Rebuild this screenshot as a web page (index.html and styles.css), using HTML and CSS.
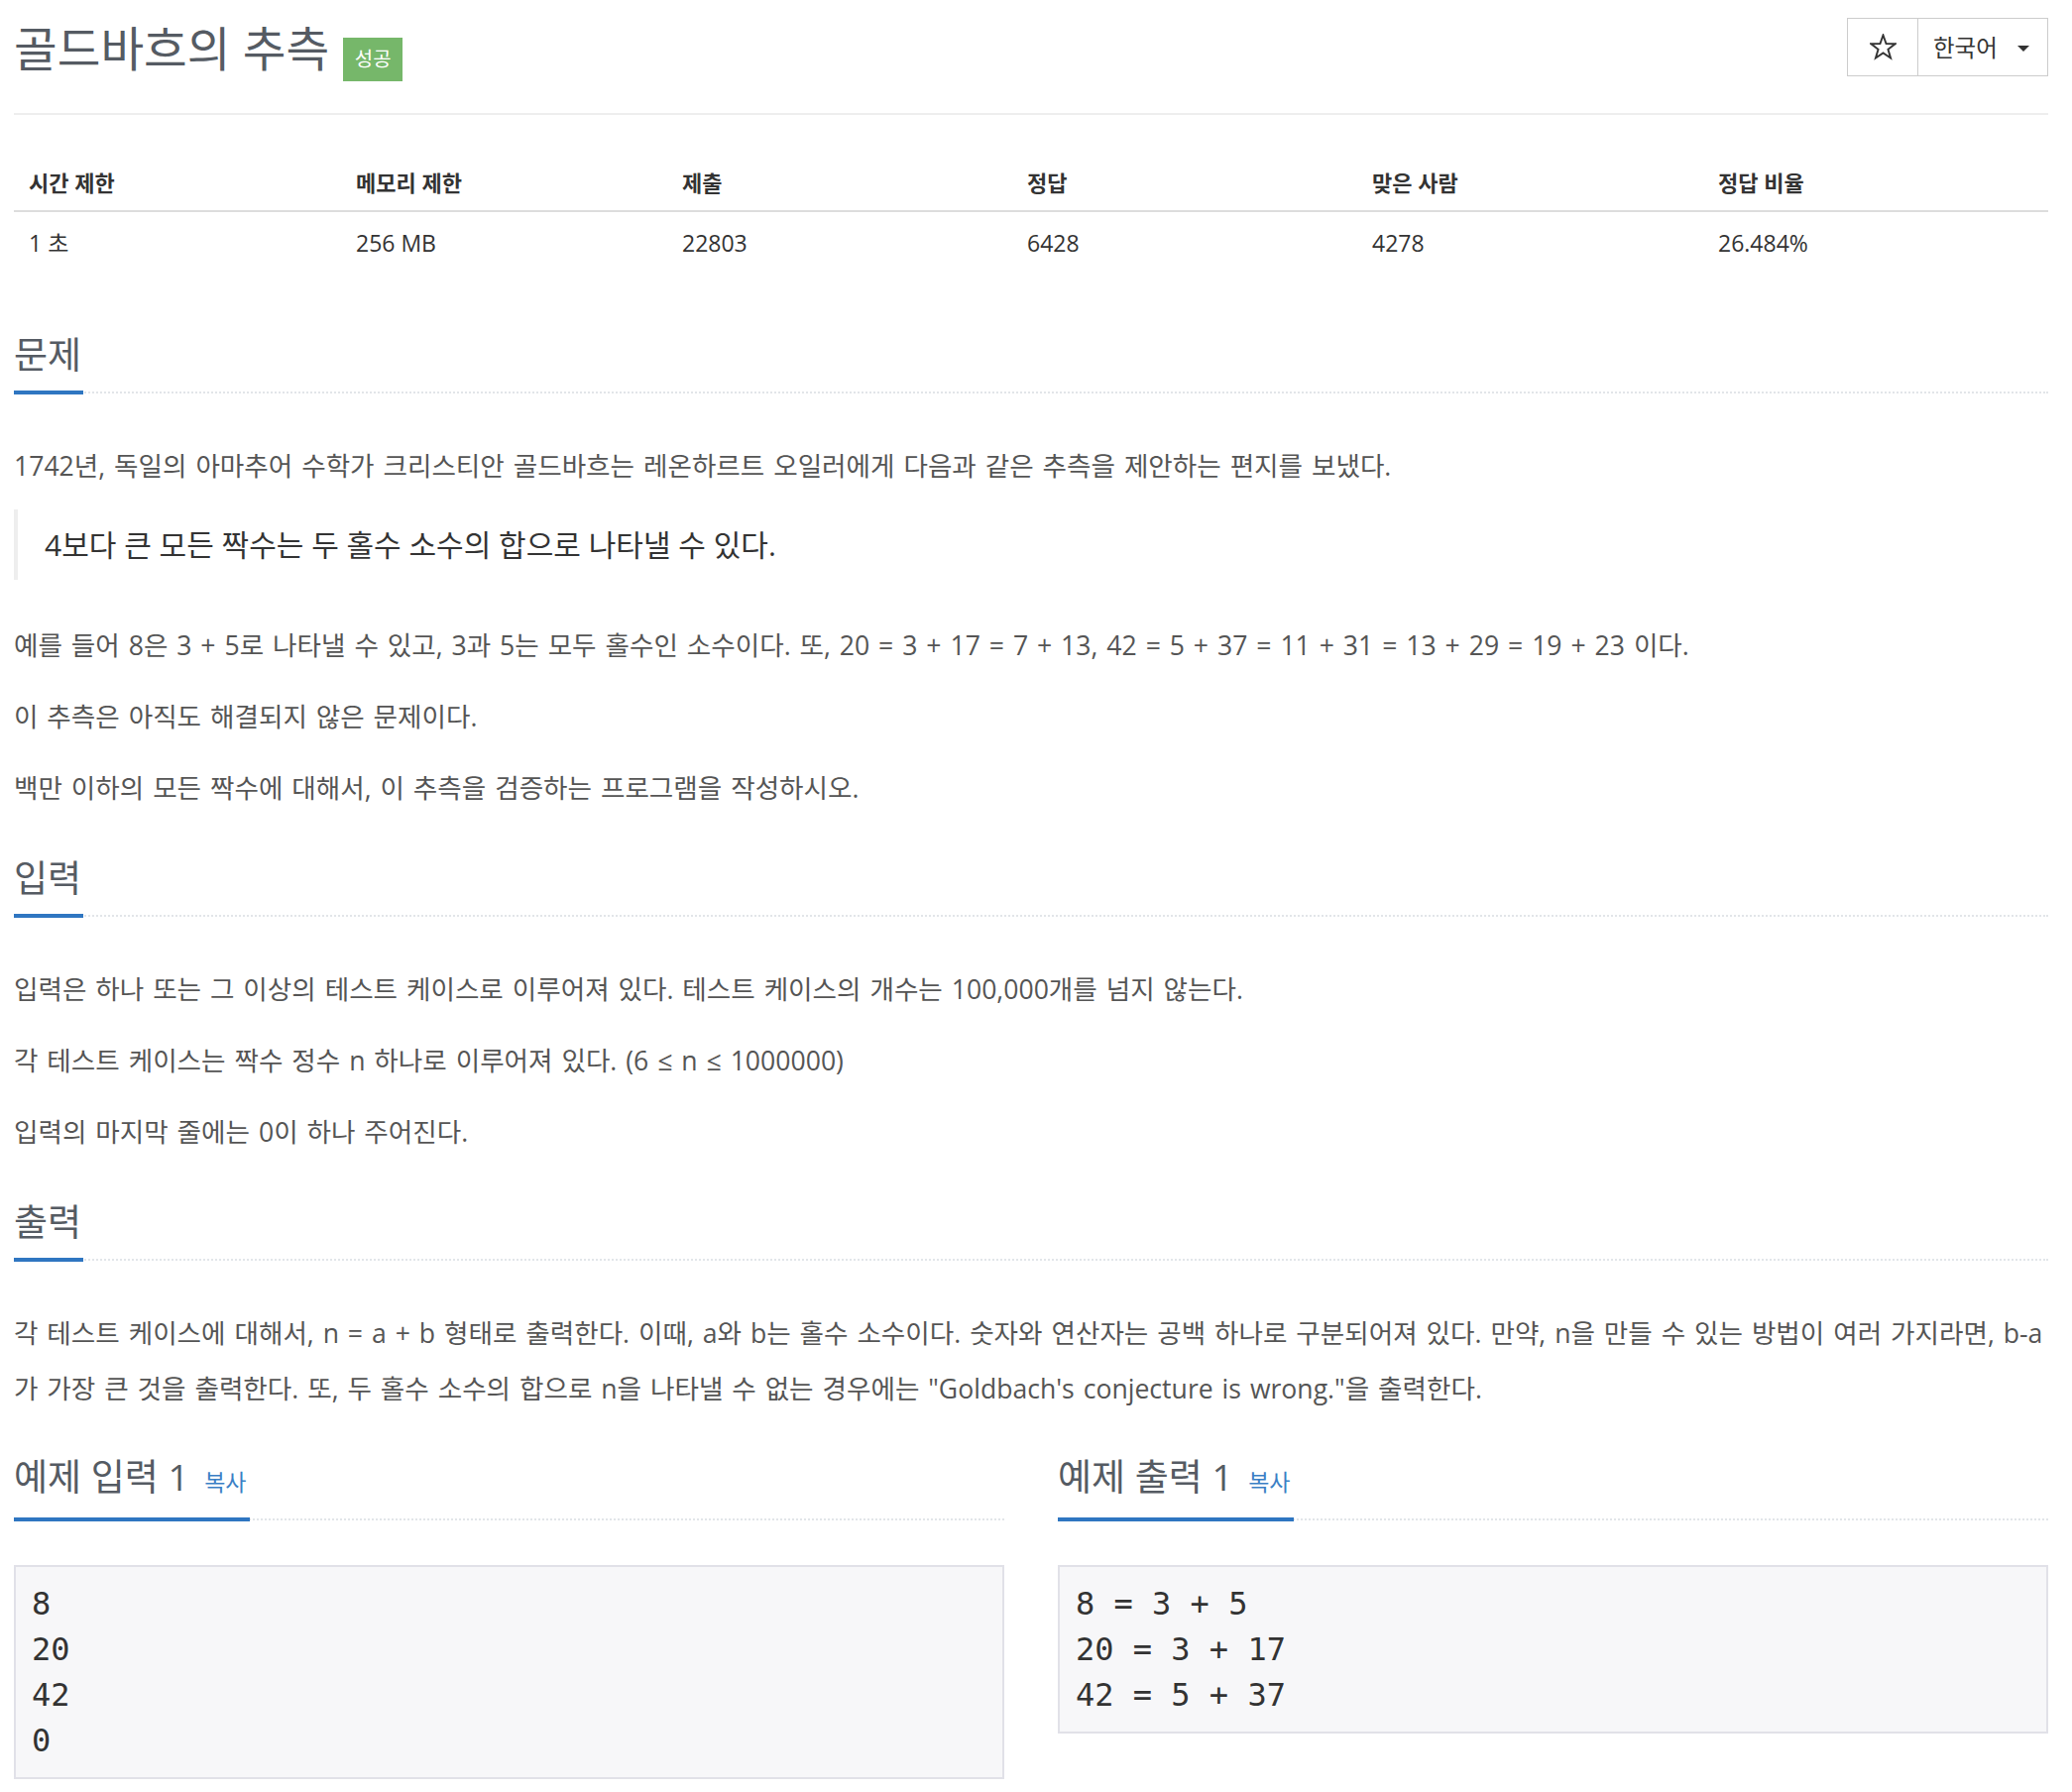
FILE: index.html
```html
<!DOCTYPE html>
<html lang="ko">
<head>
<meta charset="utf-8">
<title>골드바흐의 추측</title>
<link rel="stylesheet" href="styles.css">
</head>
<body>
<div class="page">
  <div class="page-header">
    <h1 class="title"><span class="title-text">골드바흐의 추측</span><span class="badge">성공</span></h1>
    <div class="btn-group">
      <button class="btn btn-star" type="button" aria-label="즐겨찾기">
        <svg class="star" viewBox="0 0 24 24" width="27" height="27" aria-hidden="true"><path d="M12 1.3 L14.7 8.9 L22.8 9.1 L16.4 14 L18.7 21.8 L12 17.2 L5.3 21.8 L7.6 14 L1.2 9.1 L9.3 8.9 Z" fill="none" stroke="#333" stroke-width="1.7" stroke-linejoin="miter"/></svg>
      </button>
      <button class="btn btn-lang" type="button"><span class="lang-text">한국어</span><span class="caret"></span></button>
    </div>
  </div>

  <table class="info">
    <thead>
      <tr>
        <th class="c1">시간 제한</th>
        <th class="c2">메모리 제한</th>
        <th class="c3">제출</th>
        <th class="c4">정답</th>
        <th class="c5">맞은 사람</th>
        <th class="c6">정답 비율</th>
      </tr>
    </thead>
    <tbody>
      <tr>
        <td>1 초</td>
        <td>256 MB</td>
        <td>22803</td>
        <td>6428</td>
        <td>4278</td>
        <td>26.484%</td>
      </tr>
    </tbody>
  </table>

  <section class="section">
    <div class="headline"><h2>문제</h2></div>
    <div class="text">
      <p>1742년, 독일의 아마추어 수학가 크리스티안 골드바흐는 레온하르트 오일러에게 다음과 같은 추측을 제안하는 편지를 보냈다.</p>
      <blockquote>4보다 큰 모든 짝수는 두 홀수 소수의 합으로 나타낼 수 있다.</blockquote>
      <p>예를 들어 8은 3 + 5로 나타낼 수 있고, 3과 5는 모두 홀수인 소수이다. 또, 20 = 3 + 17 = 7 + 13, 42 = 5 + 37 = 11 + 31 = 13 + 29 = 19 + 23 이다.</p>
      <p>이 추측은 아직도 해결되지 않은 문제이다.</p>
      <p>백만 이하의 모든 짝수에 대해서, 이 추측을 검증하는 프로그램을 작성하시오.</p>
    </div>
  </section>

  <section class="section">
    <div class="headline"><h2>입력</h2></div>
    <div class="text">
      <p>입력은 하나 또는 그 이상의 테스트 케이스로 이루어져 있다. 테스트 케이스의 개수는 100,000개를 넘지 않는다.</p>
      <p>각 테스트 케이스는 짝수 정수 n 하나로 이루어져 있다. (6 ≤ n ≤ 1000000)</p>
      <p>입력의 마지막 줄에는 0이 하나 주어진다.</p>
    </div>
  </section>

  <section class="section">
    <div class="headline"><h2>출력</h2></div>
    <div class="text">
      <p>각 테스트 케이스에 대해서, n = a + b 형태로 출력한다. 이때, a와 b는 홀수 소수이다. 숫자와 연산자는 공백 하나로 구분되어져 있다. 만약, n을 만들 수 있는 방법이 여러 가지라면, b-a가 가장 큰 것을 출력한다. 또, 두 홀수 소수의 합으로 n을 나타낼 수 없는 경우에는 "Goldbach's conjecture is wrong."을 출력한다.</p>
    </div>
  </section>

  <div class="samples">
    <section class="sample">
      <div class="headline"><h2>예제 입력 1 <a class="copy" href="#">복사</a></h2></div>
      <pre class="sampledata">8
20
42
0</pre>
    </section>
    <section class="sample">
      <div class="headline"><h2>예제 출력 1 <a class="copy" href="#">복사</a></h2></div>
      <pre class="sampledata">8 = 3 + 5
20 = 3 + 17
42 = 5 + 37</pre>
    </section>
  </div>
</div>
</body>
</html>
```

FILE: styles.css
```css
* {
  box-sizing: border-box;
}

html, body {
  margin: 0;
  padding: 0;
  background: #fff;
}

body {
  font-family: "Open Sans", "Noto Sans CJK KR", sans-serif;
  color: #555;
}

.page {
  padding: 0 24px 20px 14px;
}

/* ---------- header ---------- */
.page-header {
  display: flex;
  justify-content: space-between;
  align-items: flex-start;
  height: 116px;
  padding-top: 18px;
  border-bottom: 2px solid #eee;
}

.title {
  display: flex;
  align-items: flex-start;
  margin: 3px 0 0;
  font-size: 47.5px;
  line-height: 56px;
  font-weight: 400;
  color: #555b63;
}

.badge {
  display: inline-block;
  width: 60px;
  height: 44px;
  margin-left: 14px;
  margin-top: 17px;
  background: #76b76a;
  color: #fff;
  font-size: 20px;
  line-height: 44px;
  text-align: center;
}

.btn-group {
  display: flex;
}

.btn {
  height: 59px;
  border: 1px solid #ccc;
  background: #fff;
  color: #333;
  font-family: "Open Sans", "Noto Sans CJK KR", sans-serif;
  padding: 0;
  margin: 0;
  display: flex;
  align-items: center;
}

.btn-star {
  width: 72px;
  justify-content: center;
}

.star {
  display: block;
}

.btn-lang {
  width: 132px;
  margin-left: -1px;
  padding-left: 15px;
  font-size: 23.5px;
}

.lang-text {
  line-height: 30px;
}

.caret {
  display: inline-block;
  margin-left: 20px;
  margin-top: 3px;
  width: 0;
  height: 0;
  border-top: 6px solid #333;
  border-left: 6px solid transparent;
  border-right: 6px solid transparent;
}

/* ---------- info table ---------- */
.info {
  width: 100%;
  margin-top: 40px;
  border-collapse: collapse;
  table-layout: fixed;
  color: #333;
}

.info th {
  text-align: left;
  font-size: 22px;
  font-weight: 700;
  line-height: 30px;
  padding: 13px 15px;
  border-bottom: 2px solid #ddd;
}

.info td {
  font-size: 23px;
  line-height: 30px;
  padding: 16px 15px;
}

.info .c1 { width: 330px; }
.info .c2 { width: 329px; }
.info .c3 { width: 348px; }
.info .c4 { width: 348px; }
.info .c5 { width: 349px; }

/* ---------- sections ---------- */
.section {
  margin-top: 57px;
}

.section + .section {
  margin-top: 38px;
}

.headline {
  border-bottom: 2px dotted #e2e5e9;
}

.headline h2 {
  display: inline-block;
  margin: 0 0 -3px;
  padding: 0 2px 11px 0;
  font-size: 37px;
  line-height: 50px;
  font-weight: 400;
  color: #555b63;
  border-bottom: 4px solid #2f76c1;
}

.sample .headline h2 {
  padding-right: 4px;
}

.text {
  margin-top: 45px;
}

.text p {
  margin: 0 0 16px;
  font-size: 26.6px;
  line-height: 56px;
  word-spacing: 2px;
}

.text p:last-child {
  margin-bottom: 0;
}

.text blockquote {
  margin: 0 0 38px;
  padding: 10px 0 10px 27px;
  border-left: 4px solid #eee;
  font-size: 30px;
  line-height: 51px;
  color: #333;
}

/* ---------- samples ---------- */
.samples {
  display: grid;
  grid-template-columns: 1fr 1fr;
  column-gap: 54px;
  margin-top: 36px;
}

.copy {
  margin-left: 6px;
  font-size: 23px;
  color: #3a7fc5;
  text-decoration: none;
}

.sampledata {
  margin: 45px 0 0;
  padding: 14px 16px;
  border: 2px solid #e1e1e8;
  background: #f7f7f9;
  font-family: "DejaVu Sans Mono", "Liberation Mono", monospace;
  font-size: 32px;
  line-height: 46px;
  color: #333;
  white-space: pre;
}
```
